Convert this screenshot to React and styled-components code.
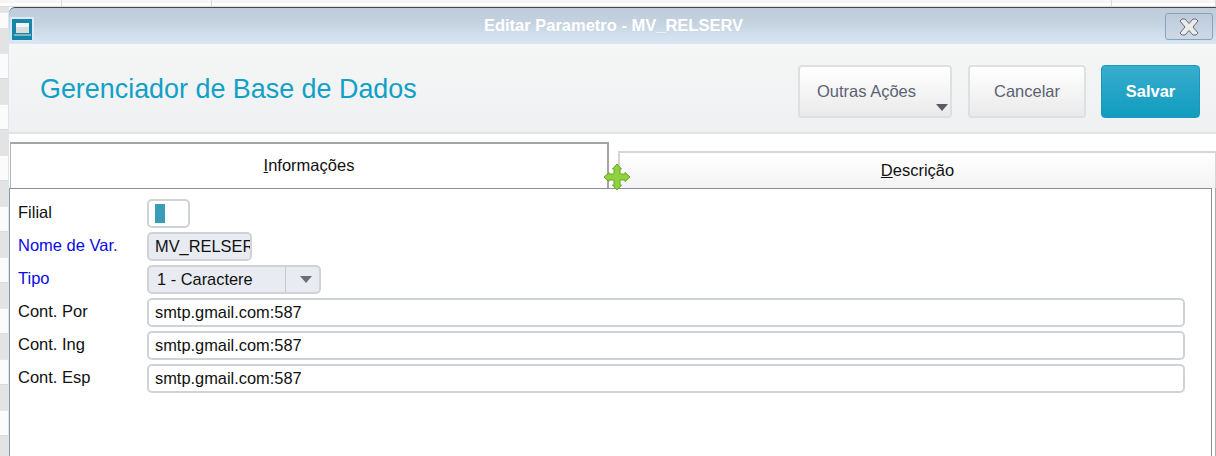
import React from "react";
import styled, { createGlobalStyle } from "styled-components";

const GlobalStyle = createGlobalStyle`
  html, body {
    margin: 0;
    padding: 0;
    background: #fff;
    overflow: hidden;
  }
  * { box-sizing: border-box; }
`;

const Page = styled.div`
  width: 1216px;
  height: 456px;
  display: flex;
  flex-direction: column;
  overflow: hidden;
  font-family: "Liberation Sans", Arial, sans-serif;
`;

const SheetTop = styled.div`
  height: 7px;
  flex: none;
  background: linear-gradient(to bottom, #f6f6f6 0, #f6f6f6 3px, #fff 3px);
  border-bottom: 1px solid #dcdcdc;
  display: grid;
  grid-template-columns: 62px 150px 900px 1fr;
  & > span { border-right: 1px solid #dadada; }
`;

const Desk = styled.div`
  flex: 1;
  display: flex;
  min-height: 0;
`;

// rows of the spreadsheet that sits behind the dialog
const SheetSide = styled.div`
  width: 8px;
  flex: none;
  background: repeating-linear-gradient(
    to bottom,
    #e3e3e3 0,
    #e3e3e3 25px,
    #d2d2d2 25px,
    #fbfbfb 26px,
    #fbfbfb 50px,
    #d2d2d2 50px,
    #e3e3e3 51px
  );
  background-position: 0 21px;
`;

const Dialog = styled.div`
  flex: 1;
  display: flex;
  flex-direction: column;
  border-left: 1px solid #d8e6f2;
  position: relative;
  min-width: 0;
`;

const TitleBar = styled.div`
  height: 37px;
  flex: none;
  display: flex;
  align-items: flex-start;
  border-top: 1px solid #4a4a4a;
  border-top-left-radius: 6px;
  background: linear-gradient(to bottom, #bfcddb, #c4d2e0 40%, #dae6f3);
`;

const AppIcon = styled.div`
  width: 24px;
  height: 24px;
  margin: 9px 0 0 1px;
  flex: none;
  background: #dce8f2;
  padding: 2px 2px 1px 2px;
  display: flex;
  svg { display: block; }
`;

const TitleText = styled.div`
  flex: 1;
  text-align: center;
  color: #fff;
  font-size: 16.5px;
  font-weight: bold;
  line-height: 35px;
  padding-left: 28px;
`;

const CloseButton = styled.button`
  width: 48px;
  height: 27px;
  margin: 5px 3px 0 0;
  padding: 0;
  flex: none;
  border: 1px solid #8ea0ba;
  border-radius: 3px;
  background: linear-gradient(to bottom, #bccbdb, #ced9e6);
  display: flex;
  align-items: center;
  justify-content: center;
`;

const Toolbar = styled.div`
  height: 90px;
  flex: none;
  display: flex;
  align-items: flex-start;
  padding: 21px 16px 0 31px;
  background: linear-gradient(to bottom, #f5f7f6, #eef0f2);
  border-bottom: 2px solid #e2e3e5;
`;

const Heading = styled.h1`
  flex: 1;
  margin: 0;
  font-weight: normal;
  font-size: 26.9px;
  line-height: 48px;
  color: #11a0c6;
`;

const ActionButton = styled.button`
  position: relative;
  width: ${(p) => p.$width}px;
  height: 53px;
  margin-left: ${(p) => p.$gap || 0}px;
  padding: 0 ${(p) => p.$pad || 0}px 0 0;
  flex: none;
  font-family: inherit;
  font-size: 16.5px;
  font-weight: ${(p) => (p.$primary ? "bold" : "normal")};
  color: ${(p) => (p.$primary ? "#fff" : "#5a6273")};
  border-radius: 4px;
  border: ${(p) => (p.$primary ? "1px solid #1898bc" : "2px solid #dedfe0")};
  background: ${(p) =>
    p.$primary
      ? "linear-gradient(to bottom, #39adcc, #109cc0)"
      : "linear-gradient(to bottom, #ffffff, #eaeaea)"};
`;

const Caret = styled.span`
  position: absolute;
  right: 2px;
  bottom: 5px;
  width: 0;
  height: 0;
  border-left: 6.5px solid transparent;
  border-right: 6.5px solid transparent;
  border-top: 7px solid #585b66;
`;

const Body = styled.div`
  flex: 1;
  min-height: 0;
  display: flex;
  flex-direction: column;
  padding-top: 8px;
`;

const TabStrip = styled.div`
  height: 46px;
  flex: none;
  display: flex;
  align-items: flex-end;
  position: relative;
`;

const ActiveTab = styled.div`
  width: 599px;
  height: 46px;
  margin-left: 1px;
  flex: none;
  border-top: 2px solid #a4a4a4;
  border-right: 2px solid #a4a4a4;
  border-left: 1px solid #b4b4b4;
  background: #fff;
  text-align: center;
  font-size: 16.5px;
  line-height: 42px;
  color: #111;
`;

const IdleTab = styled.div`
  flex: 1;
  height: 37px;
  margin-left: 9px;
  border-top: 2px solid #d6d6d6;
  border-left: 2px solid #d6d6d6;
  border-right: 1px solid #d6d6d6;
  background: linear-gradient(to bottom, #ffffff, #f3f3f3);
  text-align: center;
  font-size: 16.5px;
  line-height: 34px;
  color: #111;
`;

const PanelFrame = styled.div`
  flex: 1;
  min-height: 0;
  display: flex;
  padding-right: 3px;
  border-right: 1px solid #a8acb4;
`;

const Panel = styled.div`
  flex: 1;
  min-width: 0;
  border-top: 1px solid #8a8d99;
  border-left: 1px solid #8a93a4;
  border-right: 1px solid #8a8d99;
  padding: 10px 0 0 8px;
  display: flex;
  flex-direction: column;
  gap: 4px;
`;

const Row = styled.div`
  height: 29px;
  display: flex;
  align-items: center;
`;

const Label = styled.label`
  width: 129px;
  flex: none;
  font-size: 16.5px;
  line-height: 26px;
  padding-bottom: 3px;
  color: ${(p) => (p.$required ? "#0a0ae6" : "#111")};
`;

const Field = styled.div`
  width: ${(p) => p.$width}px;
  height: 29px;
  flex: none;
  display: flex;
  align-items: center;
  overflow: hidden;
  font-size: 16.4px;
  color: #111;
  white-space: nowrap;
  padding-left: 6px;
  border: 2px solid #d0d3d6;
  border-radius: 5px;
  background: ${(p) => (p.$readOnly ? "#e8ebf2" : "#fff")};
`;

const BranchMark = styled.span`
  width: 10px;
  height: 19px;
  background: #3a9db8;
`;

const SelectText = styled.span`
  flex: 1;
  padding-left: 2px;
`;

const SelectArrow = styled.span`
  width: 34px;
  height: 100%;
  flex: none;
  padding-left: 6px;
  border-left: 1px solid #c6c9ce;
  display: flex;
  align-items: center;
  justify-content: center;
  &::before {
    content: "";
    border-left: 6px solid transparent;
    border-right: 6px solid transparent;
    border-top: 7px solid #6b6e7a;
  }
`;

const DragHandle = styled.svg`
  position: absolute;
  left: 594px;
  top: 21px;
  display: block;
`;

const Mnemonic = styled.span`
  text-decoration: underline;
`;

const rows = [
  { label: "Cont. Por", value: "smtp.gmail.com:587" },
  { label: "Cont. Ing", value: "smtp.gmail.com:587" },
  { label: "Cont. Esp", value: "smtp.gmail.com:587" },
];

export default function App() {
  return (
    <Page>
      <GlobalStyle />
      <SheetTop>
        <span />
        <span />
        <span />
        <span />
      </SheetTop>
      <Desk>
        <SheetSide />
        <Dialog>
          <TitleBar>
            <AppIcon>
              <svg width="20" height="21" viewBox="0 0 20 21">
                <rect width="20" height="21" fill="#1686a8" />
                <rect x="4" y="4" width="13" height="10" fill="#d8dde0" />
                <rect x="4" y="4" width="13" height="4" fill="#f4f5f5" />
                <rect x="2" y="15" width="17" height="2" fill="#7fb4c6" />
              </svg>
            </AppIcon>
            <TitleText>Editar Parametro - MV_RELSERV</TitleText>
            <CloseButton aria-label="Fechar">
              <svg width="20" height="18" viewBox="0 0 20 18">
                <path
                  d="M1 3 L3 1 L6 1 L10 5.5 L14 1 L17 1 L19 3 L14 9 L19 15 L17 17 L14 17 L10 12.5 L6 17 L3 17 L1 15 L6 9 Z"
                  fill="#ececec"
                  stroke="#646b75"
                  strokeWidth="1"
                />
              </svg>
            </CloseButton>
          </TitleBar>
          <Toolbar>
            <Heading>Gerenciador de Base de Dados</Heading>
            <ActionButton $width={154} $pad={17}>
              Outras Ações
              <Caret />
            </ActionButton>
            <ActionButton $width={118} $gap={16}>
              Cancelar
            </ActionButton>
            <ActionButton $width={99} $gap={15} $primary>
              Salvar
            </ActionButton>
          </Toolbar>
          <Body>
            <TabStrip>
              <ActiveTab>
                <Mnemonic>I</Mnemonic>nformações
              </ActiveTab>
              <IdleTab>
                <Mnemonic>D</Mnemonic>escrição
              </IdleTab>
              <DragHandle width="28" height="28" viewBox="0 0 28 28">
                <path
                  d="M14 1 L18.5 6 L17 6 L17 11 L22 11 L22 9.5 L27 14 L22 18.5 L22 17 L17 17 L17 22 L18.5 22 L14 27 L9.5 22 L11 22 L11 17 L6 17 L6 18.5 L1 14 L6 9.5 L6 11 L11 11 L11 6 L9.5 6 Z"
                  fill="#90d23e"
                  stroke="#68a622"
                  strokeWidth="1"
                />
              </DragHandle>
            </TabStrip>
            <PanelFrame>
              <Panel>
                <Row>
                  <Label>Filial</Label>
                  <Field $width={43}>
                    <BranchMark />
                  </Field>
                </Row>
                <Row>
                  <Label $required>Nome de Var.</Label>
                  <Field $width={105} $readOnly>
                    MV_RELSERV
                  </Field>
                </Row>
                <Row>
                  <Label $required>Tipo</Label>
                  <Field $width={174} $readOnly>
                    <SelectText>1 - Caractere</SelectText>
                    <SelectArrow />
                  </Field>
                </Row>
                {rows.map((r) => (
                  <Row key={r.label}>
                    <Label>{r.label}</Label>
                    <Field $width={1038}>{r.value}</Field>
                  </Row>
                ))}
              </Panel>
            </PanelFrame>
          </Body>
        </Dialog>
      </Desk>
    </Page>
  );
}
